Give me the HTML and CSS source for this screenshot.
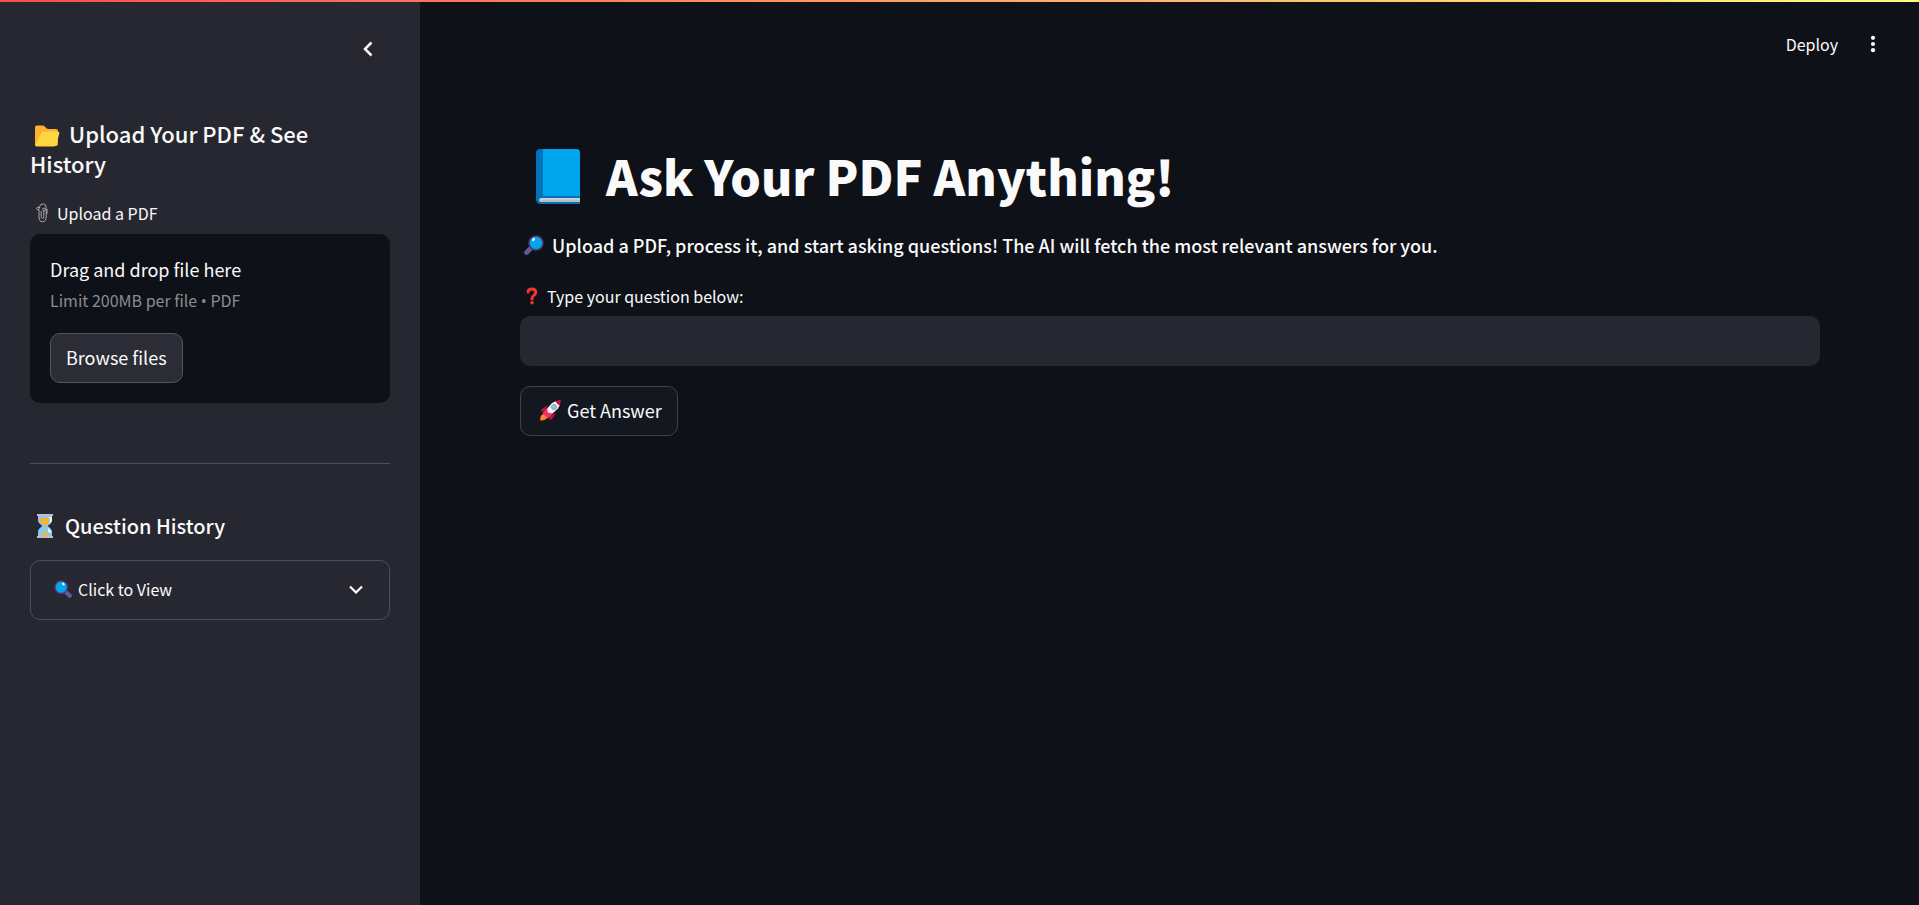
FILE: index.html
```html
<!DOCTYPE html>
<html lang="en">
<head>
<meta charset="utf-8">
<meta name="viewport" content="width=device-width, initial-scale=1">
<title>Ask Your PDF Anything!</title>
<link rel="stylesheet" href="styles.css">
</head>
<body>
<svg class="defs" aria-hidden="true">
  <symbol id="lens" viewBox="0 0 20 20">
    <path d="M13 13 17.500 17.500" stroke="#635994" stroke-width="4.600" stroke-linecap="round"/>
    <circle cx="8" cy="8" r="7" fill="#00a6ed" stroke="#533566" stroke-width="1.600"/>
    <ellipse cx="10.500" cy="4.500" rx="1.300" ry="1.700" fill="#fff" transform="rotate(-35 10.500 4.500)"/>
  </symbol>
</svg>
<div class="decoration"></div>
<div class="app">
  <aside class="sidebar">
    <div class="sidebar-header">
      <button class="icon-button" type="button" aria-label="Close sidebar">
        <svg width="24" height="24" viewBox="0 0 24 24" fill="none" stroke="currentColor" stroke-width="2.500"><path d="M15.500 5.500 9 12l6.500 6.500"/></svg>
      </button>
    </div>
    <div class="sidebar-content">
      <h2 class="sidebar-title"><svg class="folder" viewBox="0 0 26 22" aria-hidden="true"><path d="M1 2.500Q1 .5 3 .5h5.500q1.200 0 2 .8l2 1.900q.8.800 2 .8H22q2 0 2 2v13q0 2-2 2H3q-2 0-2-2z" fill="#ffb02e"/><path d="M7.200 8.300q.6-1.800 2.500-1.800h13.800q2.200 0 1.700 2.200l-2.700 10.800q-.5 2-2.500 2H2.500q-1.700 0-1.200-1.800z" fill="#fcd53f"/></svg>Upload Your PDF &amp; See History</h2>
      <label class="field-label" for="browse"><svg class="clip" viewBox="0 0 12 20" fill="none" stroke="#aaa8ad" aria-hidden="true"><path d="M3.500 5V4Q4 .8 7 .8t3.200 3.500V14q-.3 4.800-3.700 4.800T3 14V7" stroke-width="1"/><path d="M5.200 8v5.500q.1 2 1.300 2t1.300-2V8" stroke-width="1"/><circle cx="2" cy="5.500" r="1.300"/><circle cx="8" cy="6.500" r="1.400"/><path d="M11 6v5"/></svg>Upload a PDF</label>
      <div class="dropzone">
        <span class="drop-text">Drag and drop file here</span>
        <span class="drop-limit">Limit 200MB per file <span class="bullet">•</span> PDF</span>
        <button class="button button-browse" id="browse" type="button">Browse files</button>
      </div>
      <hr class="divider">
      <h3 class="history-title"><svg class="hourglass" viewBox="0 0 18 24" aria-hidden="true"><path d="M2 2h14v4q0 3-3.500 5.200-1.200.8 0 1.600Q16 15 16 18v4H2v-4q0-3 3.500-5.200 1.200-.8 0-1.600Q2 9 2 6z" fill="#83cbff"/><path d="M12.500 3H16v3q0 2.500-3 4.500 1.500-3 .5-5zM12 14q3 2 3.500 5L12 18z" fill="#e8f5ff"/><path d="M3.500 4h10.300q.2 4-4.300 7.500V18l4.500 3.500H4L8.500 18v-6.500Q3.500 8 3.500 4z" fill="#ffb02e"/><path d="M1 0h16v2H1zM1 22h16v2H1z" fill="#bebebe"/></svg>Question History</h3>
      <details class="expander">
        <summary class="expander-summary">
          <svg class="lens-small" aria-hidden="true"><use href="#lens"/></svg>
          <span class="expander-label">Click to View</span>
          <svg class="chevron" viewBox="0 0 14 9" fill="none" stroke="currentColor" stroke-width="2.200" aria-hidden="true"><path d="M1 1.500l6 6 6-6"/></svg>
        </summary>
      </details>
    </div>
  </aside>
  <div class="page">
    <header class="toolbar">
      <button class="deploy" type="button">Deploy</button>
      <button class="icon-button" type="button" aria-label="Main menu">
        <svg width="24" height="24" viewBox="0 0 24 24" fill="currentColor"><circle cx="12" cy="5.800" r="2.100"/><circle cx="12" cy="12" r="2.100"/><circle cx="12" cy="18.200" r="2.100"/></svg>
      </button>
    </header>
    <main class="content">
      <h1 class="title"><svg class="book" viewBox="0 0 44 55" aria-hidden="true"><path d="M4 0h36q4 0 4 4v51H5q-5 0-5-5V4q0-4 4-4z" fill="#0074ba"/><path d="M7 0h33q4 0 4 4v43H7z" fill="#00a6ed"/><path d="M5.500 49H44v4H5.500q-2.500 0-2.500-2t2.500-2z" fill="#d3d3d3"/><path d="M5 50.800H44V53H5.500z" fill="#bdb9be"/></svg>Ask Your PDF Anything!</h1>
      <p class="intro"><svg class="lens-flipped" aria-hidden="true"><use href="#lens"/></svg><strong>Upload a PDF, process it, and start asking questions! The AI will fetch the most relevant answers for you.</strong></p>
      <label class="field-label" for="question"><svg class="question-mark" viewBox="0 0 12 18" aria-hidden="true"><path d="M2 5Q2.300 2 5.800 2 9.700 2 9.700 5.300q0 2-2 3.200-1.700 1-1.700 3.500" fill="none" stroke="#f8312f" stroke-width="3" stroke-linecap="round"/><circle cx="6" cy="15.800" r="1.800" fill="#f8312f"/></svg>Type your question below:</label>
      <input class="question-input" id="question" type="text">
      <button class="button button-answer" type="button"><svg class="rocket" viewBox="0 0 21 21" aria-hidden="true"><path d="M8 5.500 3 8Q.8 9.500 1 12l4-1zM15.500 13 13 18q-1.500 2.200-4 2l1-4z" fill="#ca0b4a"/><path d="M1 15.500Q4 13 6 15.500T5.500 19.500Q3.500 20.500.3 20.700 0 18 1 15.500z" fill="#ff822d"/><path d="M3 13.500 7.500 18 18 8.500Q20.500 5.500 20.300.5 15.500.5 12 3z" fill="#f4f4f4"/><path d="M15.500 1.200Q18 .3 20.700.3q0 3-1 5.200-2.900-1.300-4.200-4.300z" fill="#ca0b4a"/><path d="M3 12.500 7 8.500l1 4 4.500 1L8.500 18Q4.500 17 3 12.500z" fill="#f92f60"/><circle cx="14" cy="7" r="2.500" fill="#83cbff" stroke="#9b9b9b"/></svg>Get Answer</button>
    </main>
  </div>
</div>
</body>
</html>
```

FILE: styles.css
```css
* {
  box-sizing: border-box;
}

body {
  margin: 0;
  background: #0e1117;
  color: #fafafa;
  font-family: "Noto Sans CJK SC", "Noto Sans", sans-serif;
  font-size: 18px;
  line-height: 32px;
}

button,
input {
  font: inherit;
  color: inherit;
}

h1, h2, h3, p {
  margin: 0;
}

.defs {
  position: absolute;
  width: 0;
  height: 0;
}

.decoration {
  position: absolute;
  top: 0;
  left: 0;
  right: 0;
  height: 2px;
  background: linear-gradient(90deg, #ff4b4b, #fffd80);
}

.app {
  display: flex;
  min-height: 100vh;
}

.sidebar {
  flex: 0 0 420px;
  background: #262730;
}

.sidebar-header {
  display: flex;
  justify-content: flex-end;
  padding: 37px 40px 0;
}

.icon-button {
  display: flex;
  padding: 0;
  border: 0;
  background: none;
}

.sidebar-content {
  display: flex;
  flex-direction: column;
  padding: 57px 30px 30px;
}

.sidebar-title {
  padding-right: 20px;
  font-size: 22px;
  line-height: 30px;
  font-weight: 500;
}

.folder {
  width: 26px;
  height: 22px;
  margin: 0 9px 0 4px;
  vertical-align: -4px;
}

.field-label {
  display: flex;
  align-items: center;
  font-size: 16px;
  line-height: 26px;
}

.sidebar .field-label {
  margin: 22px 0 8px;
}

.clip {
  width: 12px;
  height: 20px;
  margin: 0 9px 0 6px;
}

.dropzone {
  display: flex;
  flex-direction: column;
  align-items: flex-start;
  padding: 19px 20px 20px;
  border-radius: 10px;
  background: #0e1117;
}

.drop-limit {
  margin-top: 1px;
  font-size: 16px;
  line-height: 28px;
  color: #8b8c90;
}

.bullet {
  font-family: "Open Sans", sans-serif;
  line-height: 1;
}

.button {
  display: flex;
  align-items: center;
  height: 50px;
  padding: 0 15px 2px;
  border: 1px solid #41434a;
  border-radius: 10px;
  background: #131720;
}

.button-browse {
  margin-top: 19px;
  border-color: #54555d;
  background: #2b2c36;
}

.divider {
  width: 100%;
  height: 1px;
  margin: 60px 0 48px;
  border: 0;
  background: #4c4d56;
}

.history-title {
  display: flex;
  align-items: center;
  font-size: 20px;
  line-height: 28px;
  font-weight: 500;
}

.hourglass {
  width: 18px;
  height: 24px;
  margin: 0 11px 0 6px;
}

.expander {
  margin-top: 20px;
  border: 1px solid #4c4d56;
  border-radius: 10px;
}

.expander-summary {
  display: flex;
  align-items: center;
  padding: 12px 26px 14px 23px;
  font-size: 16px;
  list-style: none;
}

.lens-small {
  width: 18px;
  height: 18px;
  margin-right: 6px;
}

.expander-label {
  flex: 1;
}

.chevron {
  width: 14px;
  height: 9px;
}

.page {
  flex: 1;
  min-width: 0;
}

.toolbar {
  display: flex;
  justify-content: flex-end;
  align-items: center;
  gap: 23px;
  height: 88px;
  padding: 0 34px;
}

.deploy {
  padding: 0;
  border: 0;
  background: none;
  font-size: 16px;
}

.content {
  display: flex;
  flex-direction: column;
  padding: 55px 99px 40px 100px;
}

.title {
  display: flex;
  align-items: center;
  font-size: 48px;
  line-height: 64px;
  font-weight: 900;
}

.book {
  width: 44px;
  height: 55px;
  margin: 2px 26px 0 16px;
}

.intro {
  display: flex;
  align-items: center;
  margin-top: 22px;
}

.intro strong {
  font-weight: 500;
}

.lens-flipped {
  width: 20px;
  height: 20px;
  margin: 0 8px 0 4px;
  transform: scaleX(-1);
}

.content .field-label {
  margin: 22px 0 7px;
}

.question-mark {
  width: 12px;
  height: 18px;
  margin: 0 9px 0 6px;
}

.question-input {
  width: 100%;
  height: 50px;
  padding: 0 15px;
  border: 0;
  border-radius: 10px;
  background: #262730;
}

.button-answer {
  align-self: flex-start;
  margin-top: 20px;
}

.rocket {
  width: 21px;
  height: 21px;
  margin: 0 6px 0 4px;
}
```
